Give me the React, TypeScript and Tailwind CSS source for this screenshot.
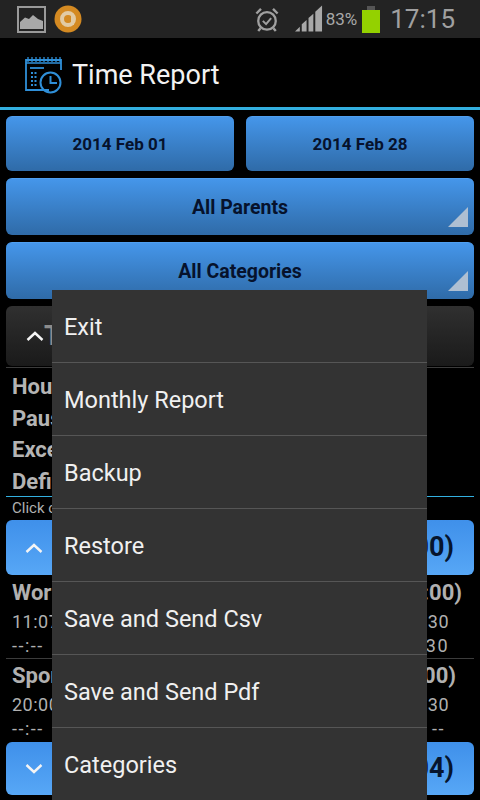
const font = "font-['Roboto',sans-serif]"

const menuItems = ['Exit', 'Monthly Report', 'Backup', 'Restore', 'Save and Send Csv', 'Save and Send Pdf', 'Categories']

const ChevronUp = () => (
  <svg width="20" height="12" viewBox="0 0 20 12" fill="none" stroke="#f4f4f4" strokeWidth="2.4">
    <path d="M2.500 10 L10 3 L17.500 10" />
  </svg>
)

const ChevronDown = () => (
  <svg width="20" height="12" viewBox="0 0 20 12" fill="none" stroke="#f4f4f4" strokeWidth="2.4">
    <path d="M2.500 2 L10 9 L17.500 2" />
  </svg>
)

const Corner = () => (
  <svg className="absolute right-[6px] bottom-[8px]" width="20" height="20" viewBox="0 0 20 20">
    <path d="M20 0 V20 H0 Z" fill="#aebfd2" />
  </svg>
)

const BlueButton = ({ label, h, text, corner }: { label: string; h: string; text: string; corner?: boolean }) => (
  <div className={`relative flex-1 flex items-center justify-center pt-[1px] rounded-[6px] bg-gradient-to-b from-[#4596ea] to-[#2f6ba8] border-t border-[#4f9ff0] ${h}`}>
    <span className={`font-bold text-[#06122c] ${text}`}>{label}</span>
    {corner && <Corner />}
  </div>
)

const Row = ({ left, right, className }: { left: string; right: string; className: string }) => (
  <div className={`flex justify-between ${className}`}>
    <span>{left}</span>
    <span>{right}</span>
  </div>
)

export default function App() {
  return (
    <div className={`relative w-[480px] h-[800px] overflow-hidden bg-black ${font}`}>
      {/* Status bar */}
      <div className="h-[38px] bg-[#232323] flex items-center pl-[17px] pr-[25px]">
        <svg width="29" height="27" viewBox="0 0 29 27" fill="none">
          <rect x="1" y="1" width="27" height="25" stroke="#9a9a9a" strokeWidth="2" />
          <path d="M3 23 V16 L8 11.500 L12 13 L16 9 L21 13 L26 15 V23 Z" fill="#a8a8a8" />
        </svg>
        <svg className="ml-[8px]" width="28" height="28" viewBox="0 0 28 28" fill="none">
          <circle cx="14" cy="14" r="13.500" fill="#d48a22" />
          <circle cx="14" cy="14" r="6" stroke="#e2cba4" strokeWidth="4" />
          <path d="M18.500 10 V20" stroke="#e2cba4" strokeWidth="3" />
        </svg>
        <svg className="ml-auto" width="24" height="27" viewBox="0 0 26 27" fill="none" stroke="#a0a0a0">
          <circle cx="13" cy="15" r="9.500" strokeWidth="2.500" />
          <path d="M8.500 15 L12 18.500 L17.500 12" strokeWidth="2.200" />
          <path d="M1.500 7 L6.500 2 M24.500 7 L19.500 2 M6 23 L3.500 26 M20 23 L22.500 26" strokeWidth="2.600" />
        </svg>
        <svg className="ml-[16px]" width="28" height="28" viewBox="0 0 29 28" fill="#a8a8a8">
          <path d="M0 27 L5 22 V27 Z" />
          <path d="M7 27 V19.500 L12 15 V27 Z" />
          <path d="M14 27 V13 L19 8.500 V27 Z" />
          <path d="M21 27 V6.500 L28 0 V27 Z" />
        </svg>
        <span className="ml-[3px] text-[17px] text-[#a8a8a8] leading-none">83%</span>
        <div className="ml-[5px] flex flex-col items-center">
          <div className="w-[8px] h-[4px] bg-[#555555]" />
          <div className="w-[18px] h-[23px] bg-[#94d100]" />
        </div>
        <span className="ml-[10px] text-[26px] text-[#a0a0a0] leading-none">17:15</span>
      </div>

      {/* Action bar */}
      <div className="h-[69px] bg-black flex items-center pl-[25px] pt-[5px]">
        <svg width="37" height="37" viewBox="0 0 37 37" fill="none" stroke="#2f8fd8">
          <path d="M24 33 H1 V3 H36 V13" strokeWidth="1.800" />
          <path d="M1 6 H36" strokeWidth="1.500" />
          <path d="M3 0 V5 M7 0 V5 M11 0 V5 M15 0 V5 M19 0 V5 M23 0 V5 M27 0 V5 M31 0 V5 M35 0 V5" strokeWidth="1.300" />
          <path d="M5 11 H19" strokeWidth="1.800" />
          <path d="M6 16 H12 M6 20 H12 M6 24 H12 M6 28 H12" strokeWidth="2" strokeDasharray="2 1.500" />
          <circle cx="25.500" cy="25.500" r="10" strokeWidth="2" />
          <path d="M25.500 19 V26 H32" strokeWidth="2" />
        </svg>
        <span className="ml-[10px] text-[27px] text-[#f2f2f2] leading-none">Time Report</span>
      </div>
      <div className="h-[3px] bg-[#33b0e0]" />

      {/* Filters */}
      <div className="px-[6px] pt-[6px] flex flex-col gap-[7px]">
        <div className="flex gap-[12px]">
          <BlueButton label="2014 Feb 01" h="h-[55px]" text="text-[17px]" />
          <BlueButton label="2014 Feb 28" h="h-[55px]" text="text-[17px]" />
        </div>
        <div className="flex">
          <BlueButton label="All Parents" h="h-[57px]" text="text-[19.5px]" corner />
        </div>
        <div className="flex">
          <BlueButton label="All Categories" h="h-[57px]" text="text-[19.5px]" corner />
        </div>
      </div>

      {/* Totals */}
      <div className="mx-[6px] mt-[7px] h-[60px] flex items-center pl-[19px] rounded-[6px] bg-gradient-to-b from-[#303030] to-[#1a1a1a]">
        <ChevronUp />
        <span className="ml-[-1px] text-[27px] font-bold text-[#8c8c8c]">Total</span>
      </div>
      <div className="mx-[6px] h-px mt-[1px] bg-[#3c3c3c]" />
      <div className="mx-[6px] pl-[6px] pr-[12px] pt-[3px] text-[22px] font-bold text-[#b4b4b4] leading-[31.500px]">
        <Row left="Hours" right="" className="" />
        <Row left="Pause" right="" className="" />
        <Row left="Exceeded" right="" className="" />
        <Row left="Definition" right="" className="" />
      </div>
      <div className="mx-[6px] h-px mt-[-1px] bg-[#33b0e0]" />
      <div className="mx-[6px] pl-[6px] text-[15px] text-[#b0b0b0] leading-[23px]">Click on</div>

      {/* Groups */}
      <div className="mx-[6px] h-[55px] flex items-center justify-between pl-[18px] pr-[20px] rounded-[6px] bg-gradient-to-b from-[#3f90ea] to-[#57a7f6]">
        <ChevronUp />
        <span className="text-[27px] font-bold text-[#06152e]">(00:00)</span>
      </div>
      <div className="mx-[6px] pl-[6px] pr-[12px] text-[#b0b0b0]">
        <Row left="Work" right="(08:00)" className="text-[22px] font-bold leading-[34px] pt-[1px]" />
        <Row left="11:07" right="12:30" className="text-[18px] leading-[23px] tracking-[0.5px] pr-[13px]" />
        <Row left="--:--" right="12:30" className="text-[18px] leading-[24px] pt-[1px] tracking-[1.5px] pr-[13px]" />
      </div>
      <div className="mx-[6px] h-px bg-[#3c3c3c]" />
      <div className="mx-[6px] pl-[6px] pr-[18px] text-[#b0b0b0]">
        <Row left="Sport" right="(02:00)" className="text-[22px] font-bold leading-[34px]" />
        <Row left="20:00" right="21:30" className="text-[18px] leading-[23px] tracking-[0.5px] pr-[7px]" />
        <Row left="--:--" right="--" className="text-[18px] leading-[25px] tracking-[1.5px] pr-[11px]" />
      </div>
      <div className="mx-[6px] mt-[1px] h-[53px] flex items-center justify-between pl-[18px] pr-[20px] rounded-[6px] bg-gradient-to-b from-[#3f90ea] to-[#57a7f6]">
        <ChevronDown />
        <span className="text-[27px] font-bold text-[#06152e]">(02:04)</span>
      </div>

      {/* Options menu */}
      <div className="absolute left-[52px] top-[290px] w-[375px] bg-[#333333]">
        {menuItems.map((item) => (
          <div
            key={item}
            className="h-[73px] flex items-center pl-[12px] pt-[3px] text-[23.5px] text-[#f0f0f0] border-b border-[#565656]"
          >
            {item}
          </div>
        ))}
      </div>
    </div>
  )
}
